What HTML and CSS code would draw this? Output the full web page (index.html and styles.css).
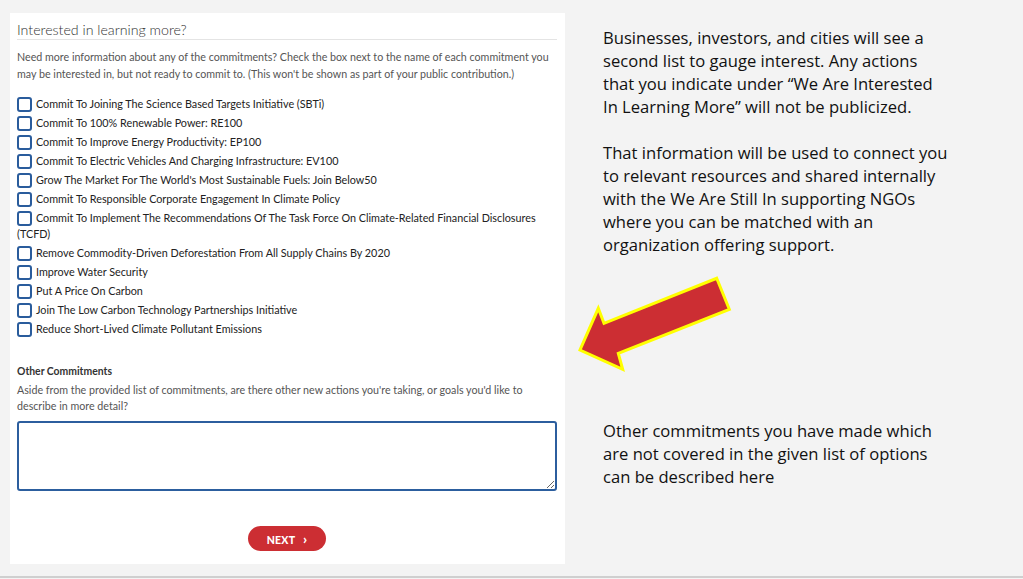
FILE: index.html
```html
<!DOCTYPE html>
<html>
<head>
    <title>Interested in learning more</title>
    <link rel="stylesheet" href="styles.css">
</head>
<body>
    <div class="slide">
        <div class="form-panel">
            <h2 class="form-title">Interested in learning more?</h2>
            <p class="hint">Need more information about any of the commitments? Check the box next to the name of each commitment you may be interested in, but not ready to commit to. (This won't be shown as part of your public contribution.)</p>

            <ul class="choices">
                <li><span class="box"></span>Commit To Joining The Science Based Targets Initiative (SBTi)</li>
                <li><span class="box"></span>Commit To 100% Renewable Power: RE100</li>
                <li><span class="box"></span>Commit To Improve Energy Productivity: EP100</li>
                <li><span class="box"></span>Commit To Electric Vehicles And Charging Infrastructure: EV100</li>
                <li><span class="box"></span>Grow The Market For The World's Most Sustainable Fuels: Join Below50</li>
                <li><span class="box"></span>Commit To Responsible Corporate Engagement In Climate Policy</li>
                <li><span class="box"></span>Commit To Implement The Recommendations Of The Task Force On Climate-Related Financial Disclosures (TCFD)</li>
                <li><span class="box"></span>Remove Commodity-Driven Deforestation From All Supply Chains By 2020</li>
                <li><span class="box"></span>Improve Water Security</li>
                <li><span class="box"></span>Put A Price On Carbon</li>
                <li><span class="box"></span>Join The Low Carbon Technology Partnerships Initiative</li>
                <li><span class="box"></span>Reduce Short-Lived Climate Pollutant Emissions</li>
            </ul>

            <h3 class="sub-title">Other Commitments</h3>
            <p class="hint">Aside from the provided list of commitments, are there other new actions you're taking, or goals you'd like to describe in more detail?</p>
            <textarea class="other-box"></textarea>

            <div class="actions">
                <button class="next-btn">NEXT <span class="chev">&#8250;</span></button>
            </div>
        </div>

        <div class="notes">
            <p>Businesses, investors, and cities will see a second list to gauge interest. Any actions that you indicate under &ldquo;We Are Interested In Learning More&rdquo; will not be publicized.</p>
            <p>That information will be used to connect you to relevant resources and shared internally with the We Are Still In supporting NGOs where you can be matched with an organization offering support.</p>
            <p class="notes-last">Other commitments you have made which are not covered in the given list of options can be described here</p>
        </div>

        <svg class="arrow" width="170" height="110" viewBox="570 270 170 110">
            <polygon points="716.7,278.3 729.3,309.3 618.3,353.3 622.7,369.3 580,350 598.3,308.3 604,323.3" fill="#cc2e33" stroke="#ffff00" stroke-width="3" stroke-linejoin="miter"/>
        </svg>
    </div>
    <div class="bottom-rule"></div>
</body>
</html>
```

FILE: styles.css
```css
/* slide with form capture + notes */
body {
    margin: 0;
    padding: 0;
    background: #f3f3f3;
    font-family: Lato, "Open Sans", sans-serif;
}

.slide {
    position: relative;
    display: flex;
    height: 576px;
}

.form-panel {
    width: 555px;
    height: 551px;
    flex-shrink: 0;
    box-sizing: border-box;
    margin: 13px 0 0 10px;
    padding: 8px 8px 0 7px;
    background: #fff;
}

.form-title {
    margin: 0;
    padding-bottom: 1px;
    border-bottom: 1px solid #e4e4e4;
    font-size: 14.2px;
    font-weight: 300;
    color: #333;
}

.hint {
    margin: 8px 0 0;
    font-size: 10.7px;
    line-height: 17px;
    color: #555;
}

.choices {
    list-style: none;
    margin: 14px 0 0;
    padding: 0;
}

.choices li {
    font-size: 10.8px;
    line-height: 16px;
    color: #222;
    margin-bottom: 3px;
}

.box {
    display: inline-block;
    width: 11px;
    height: 11px;
    margin-right: 4px;
    vertical-align: -4px;
    border: 2px solid #2a5c9c;
    border-radius: 3px;
}

.sub-title {
    margin: 28px 0 0;
    font-size: 10.4px;
    font-weight: 700;
    color: #333;
}

.sub-title + .hint {
    margin-top: 5px;
    line-height: 16px;
}

.other-box {
    display: block;
    width: 100%;
    height: 70px;
    box-sizing: border-box;
    margin-top: 7px;
    border: 2px solid #2c5e9e;
    border-radius: 3px;
    resize: vertical;
}

.actions {
    display: flex;
    justify-content: center;
    margin-top: 35px;
}

.next-btn {
    width: 78px;
    height: 25px;
    border: none;
    border-radius: 13px;
    background: #cc2e33;
    color: #fff;
    font-family: Lato, sans-serif;
    font-size: 10.5px;
    font-weight: 900;
    letter-spacing: 0.3px;
}

.chev {
    margin-left: 5px;
    font-size: 14px;
}

.notes {
    width: 348px;
    margin-left: 38px;
    padding-top: 26px;
    font-family: "Open Sans", sans-serif;
    font-size: 16.6px;
    line-height: 23px;
    color: #111;
}

.notes p {
    margin: 0 0 23px;
}

.notes-last {
    padding-top: 140px;
}

.arrow {
    position: absolute;
    left: 570px;
    top: 270px;
    overflow: visible;
}

.bottom-rule {
    height: 3px;
    border-top: 2px solid #cfcfcf;
    background: #f3f3f3;
}
```
